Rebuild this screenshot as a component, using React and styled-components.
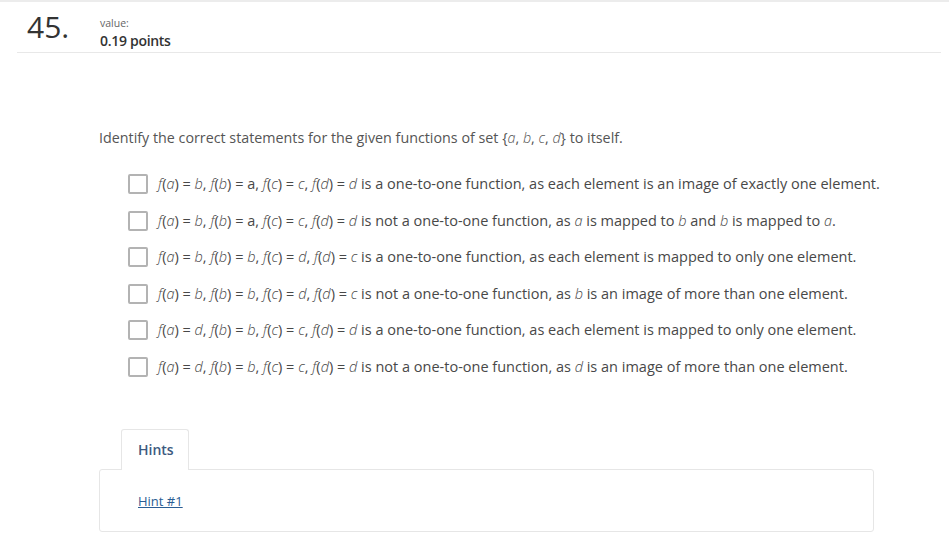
import React from 'react';
import styled, { createGlobalStyle } from 'styled-components';

const Global = createGlobalStyle`
  body {
    margin: 0;
    background: #fff;
    font-family: "Open Sans", "Liberation Sans", sans-serif;
    color: #333;
  }
`

const Page = styled.div`
  width: 949px;
  height: 545px;
  border-top: 2px solid #ececec;
  box-sizing: border-box;
  overflow: hidden;
`

const Header = styled.div`
  display: flex;
  align-items: flex-start;
  margin-left: 17px;
  margin-right: 8px;
  height: 50px;
  border-bottom: 1px solid #e8e8e8;
`

const Number = styled.div`
  width: 73px;
  padding-left: 10px;
  padding-top: 10px;
  font-size: 30px;
  line-height: 30px;
  color: #333;
`

const Value = styled.div`
  padding-top: 16px;
`

const ValueLabel = styled.div`
  font-size: 10.5px;
  line-height: 11px;
  color: #666;
`

const ValuePoints = styled.div`
  margin-top: 4px;
  font-size: 14px;
  font-weight: 600;
  line-height: 16px;
  color: #333;
  letter-spacing: -0.3px;
`

const Body = styled.div`
  padding: 76px 0 0 99px;
`

const Question = styled.p`
  margin: 0;
  font-size: 14.3px;
  line-height: 18px;
  color: #555;
`

const Options = styled.div`
  display: flex;
  flex-direction: column;
  gap: 16.6px;
  margin: 27px 0 0 29px;
`

const Option = styled.label`
  display: flex;
  align-items: center;
  gap: 10px;
  font-size: 14.5px;
  line-height: 20px;
  color: #484848;
  white-space: nowrap;
`

const Box = styled.span`
  width: 16px;
  height: 16px;
  border: 2px solid #b3b3b3;
  border-radius: 2px;
  flex-shrink: 0;
`

const M = styled.i`
  font-style: italic;
  font-weight: 300;
`

const HintsArea = styled.div`
  margin-top: 51px;
  width: 775px;
`

const Tab = styled.div`
  display: inline-block;
  margin-left: 22px;
  width: 68px;
  height: 41px;
  box-sizing: border-box;
  border: 1px solid #e6e6e6;
  border-bottom: none;
  border-radius: 3px 3px 0 0;
  background: #fff;
  position: relative;
  top: 1px;
  font-size: 14px;
  font-weight: 600;
  color: #3d5a80;
  line-height: 40px;
  padding-left: 16px;
`

const Panel = styled.div`
  height: 63px;
  box-sizing: border-box;
  border: 1px solid #e6e6e6;
  border-radius: 3px;
  padding: 19px 0 0 38px;
`

const HintLink = styled.a`
  font-size: 13px;
  color: #2a5d94;
  text-decoration: underline;
`

const f = (x) => <><M>f</M>(<M>{x}</M>)</>

const rows = [
  [['b', 'a', 'c', 'd'], <> is a one-to-one function, as each element is an image of exactly one element.</>],
  [['b', 'a', 'c', 'd'], <> is not a one-to-one function, as <M>a</M> is mapped to <M>b</M> and <M>b</M> is mapped to <M>a</M>.</>],
  [['b', 'b', 'd', 'c'], <> is a one-to-one function, as each element is mapped to only one element.</>],
  [['b', 'b', 'd', 'c'], <> is not a one-to-one function, as <M>b</M> is an image of more than one element.</>],
  [['d', 'b', 'c', 'd'], <> is a one-to-one function, as each element is mapped to only one element.</>],
  [['d', 'b', 'c', 'd'], <> is not a one-to-one function, as <M>d</M> is an image of more than one element.</>],
]

const vals = (v) => {
  // in the first two rows f(b) = a is set upright
  const plain = v[0] === 'b' && v[1] === 'a'
  return (
    <>
      {f('a')} = <M>{v[0]}</M>, {f('b')} = {plain ? v[1] : <M>{v[1]}</M>}, {f('c')} = <M>{v[2]}</M>, {f('d')} = <M>{v[3]}</M>
    </>
  )
}

function App() {
  return (
    <Page>
      <Global />
      <Header>
        <Number>45.</Number>
        <Value>
          <ValueLabel>value:</ValueLabel>
          <ValuePoints>0.19 points</ValuePoints>
        </Value>
      </Header>
      <Body>
        <Question>
          Identify the correct statements for the given functions of set {'{'}<M>a</M>, <M>b</M>, <M>c</M>, <M>d</M>{'}'} to itself.
        </Question>
        <Options>
          {rows.map((r, i) => (
            <Option key={i}>
              <Box />
              <span>{vals(r[0])}{r[1]}</span>
            </Option>
          ))}
        </Options>
        <HintsArea>
          <Tab>Hints</Tab>
          <Panel>
            <HintLink href="#">Hint #1</HintLink>
          </Panel>
        </HintsArea>
      </Body>
    </Page>
  );
}

export default App;
